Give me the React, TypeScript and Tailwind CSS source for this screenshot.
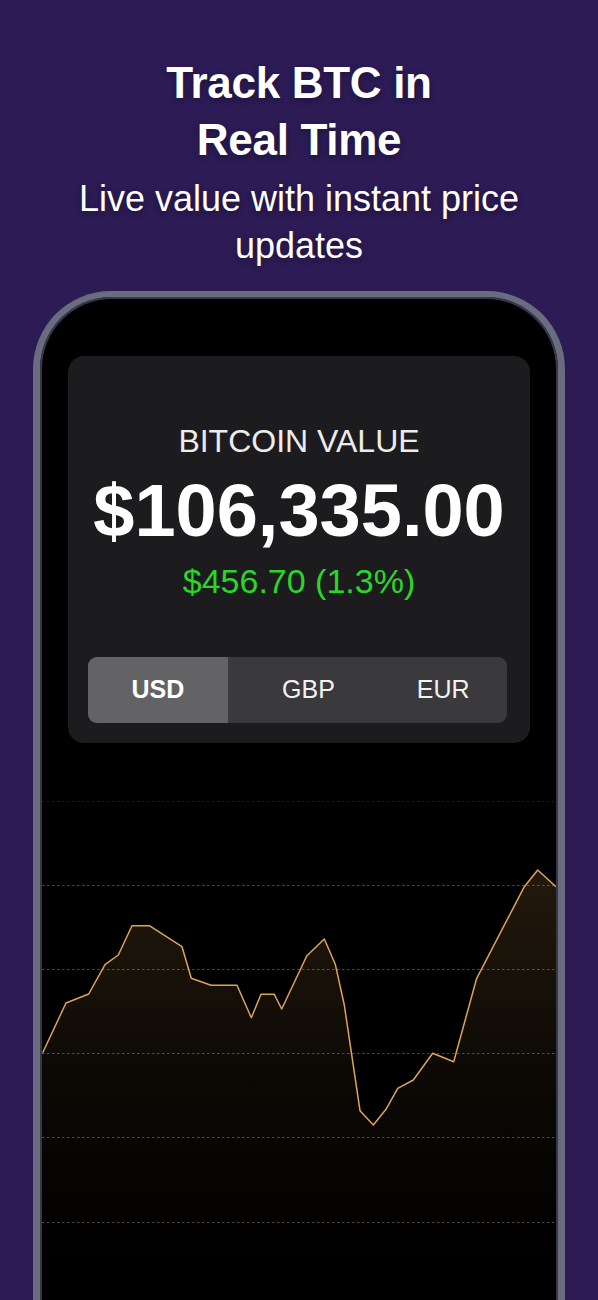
import React from 'react'

const points: [number, number][] = [
  [0.7, 251.7], [24, 202], [46.7, 193], [63, 163.7], [76.3, 154], [90, 124.7],
  [107.3, 124.7], [140, 145.7], [149.3, 177.3], [169, 184.3], [195, 184.3],
  [209.3, 216.7], [219, 193.3], [232.3, 193.3], [239.7, 208], [264.7, 155],
  [282.3, 138], [293.3, 163.3], [302.3, 204], [318, 309.7], [331.3, 324],
  [344, 308.3], [355.7, 287.3], [371.3, 279], [390.7, 252.3], [411.7, 260.7],
  [434.7, 177.3], [482.3, 85.7], [495.7, 69], [514, 85.7],
]

const gridLines = [84, 168, 252, 336, 421]

function PriceChart() {
  const line = points.map(([x, y]) => `${x},${y}`).join(' ')
  const area = `M0,${points[0][1]} L${line.replace(/ /g, ' L')} L514,500 L0,500 Z`

  return (
    <svg width="514" height="500" viewBox="0 0 514 500" className="block">
      <defs>
        <linearGradient id="btcFill" x1="0" y1="69" x2="0" y2="460" gradientUnits="userSpaceOnUse">
          <stop offset="0" stopColor="#d9a050" stopOpacity="0.16" />
          <stop offset="0.5" stopColor="#d9a050" stopOpacity="0.06" />
          <stop offset="1" stopColor="#d9a050" stopOpacity="0" />
        </linearGradient>
      </defs>
      <line x1="0" y1="0.5" x2="514" y2="0.5" stroke="#2a2a2a" strokeWidth="1" strokeDasharray="2.5 2.5" opacity="0.6" />
      {gridLines.map((y) => (
        <line key={y} x1="0" y1={y + 0.5} x2="514" y2={y + 0.5} stroke="#4a4a4a" strokeWidth="1" strokeDasharray="2.5 2.5" />
      ))}
      <path d={area} fill="url(#btcFill)" />
      <polyline points={line} fill="none" stroke="#dea35a" strokeWidth="1.5" strokeLinejoin="round" />
    </svg>
  )
}

export default function App() {
  return (
    <main className="h-[1300px] overflow-hidden bg-[#2c1b54] font-['Liberation_Sans',Arial,sans-serif] text-white">
      <div className="pt-[54px] text-center [text-shadow:0_2px_6px_rgba(0,0,0,0.35)]">
        <h1 className="text-[44px] font-bold leading-[57px] tracking-[-0.3px]">
          Track BTC in
          <br />
          Real Time
        </h1>
        <p className="mt-[7px] text-[36px] leading-[47px]">
          Live value with instant price
          <br />
          updates
        </p>
      </div>

      <div className="mx-[33px] mt-[22px] h-[1100px] rounded-t-[78px] border-x-[7px] border-t-[6px] border-[#686c7e]">
        <div className="h-full rounded-t-[72px] border-x-2 border-t-2 border-[#363945] bg-black">
          <div className="mx-[26px] mt-[57px] rounded-[16px] bg-[#1c1c1e] pt-[66px] pb-[20px] text-center">
            <div className="text-[32px] leading-[38px] text-[#ececec]">BITCOIN VALUE</div>
            <div className="mt-[9px] text-[74px] font-bold leading-[84px]">$106,335.00</div>
            <div className="mt-[8px] text-[34px] leading-[40px] text-[#2bd62b]">$456.70 (1.3%)</div>

            <div className="mt-[56px] ml-[20px] mr-[23px] grid h-[66px] grid-cols-3 overflow-hidden rounded-[9px] bg-[#3a3a3c] text-[25px]">
              <div className="flex items-center justify-center bg-[#636366] font-bold">USD</div>
              <div className="flex items-center justify-center pl-[22px] text-[#f2f2f2]">GBP</div>
              <div className="flex items-center justify-center pl-[12px] text-[#f2f2f2]">EUR</div>
            </div>
          </div>

          <div className="mt-[58px]">
            <PriceChart />
          </div>
        </div>
      </div>
    </main>
  )
}
